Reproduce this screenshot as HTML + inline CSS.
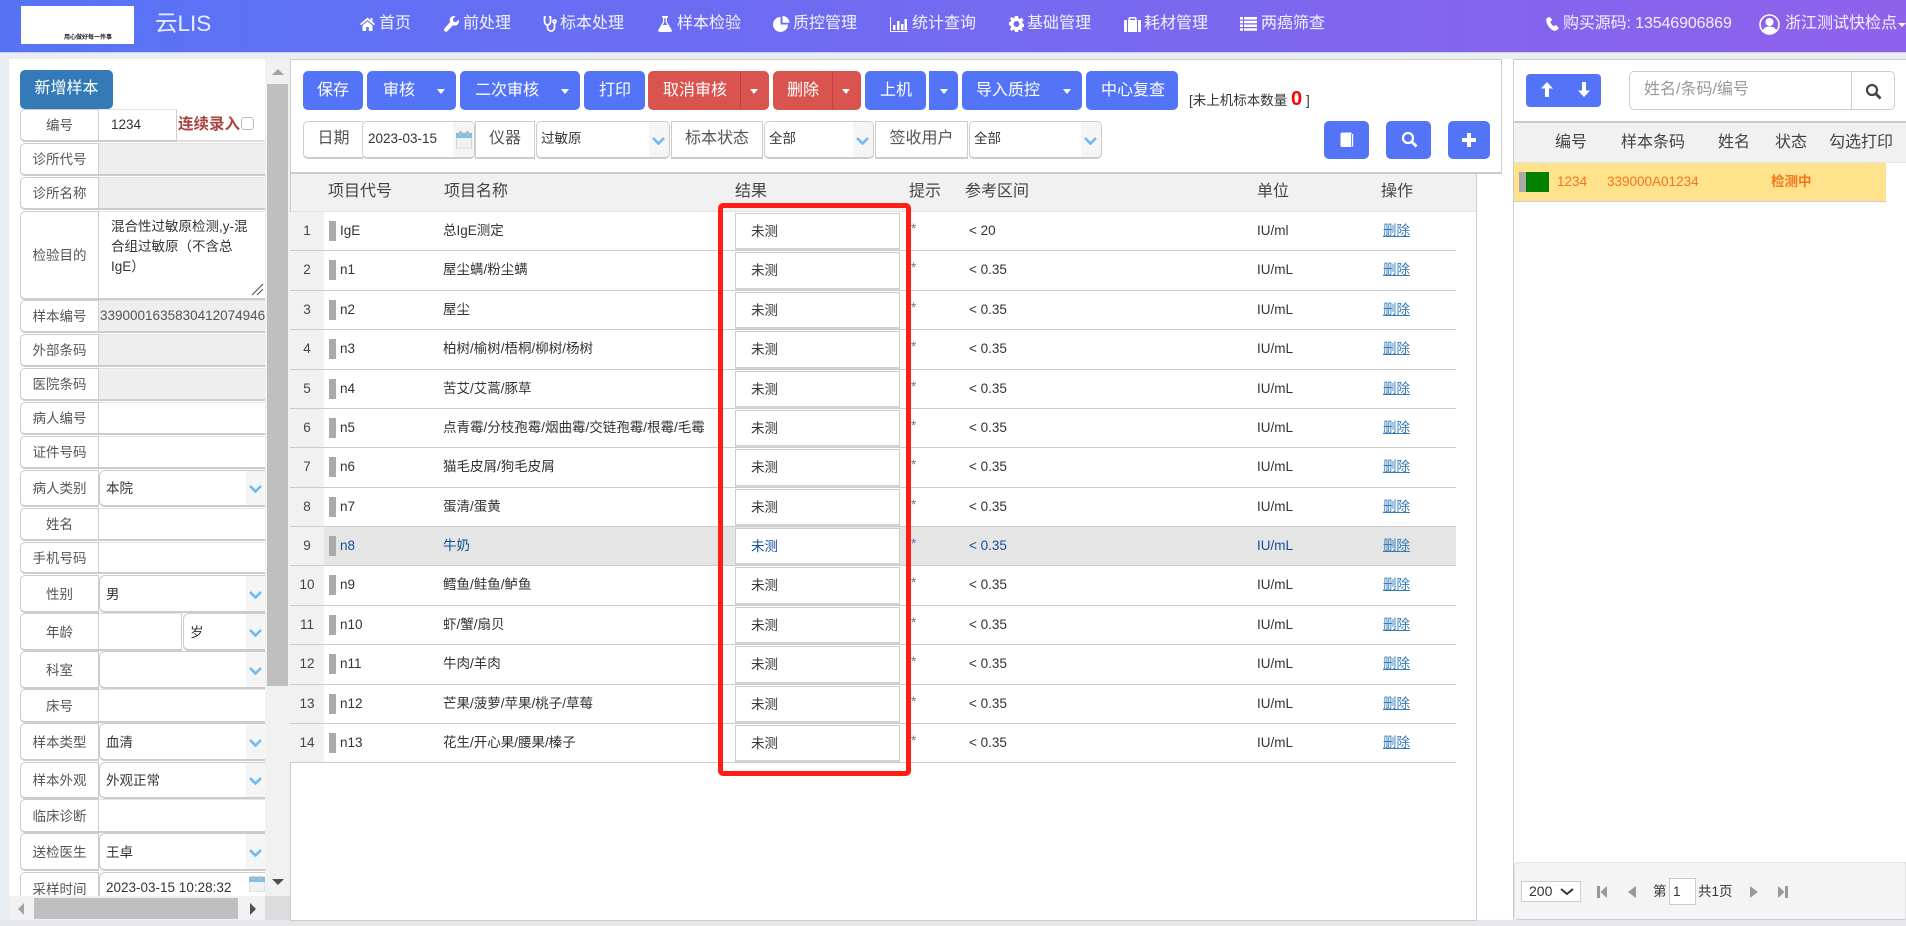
<!DOCTYPE html>
<html lang="zh-CN"><head><meta charset="utf-8"><title>云LIS</title>
<style>
*{box-sizing:border-box}
html,body{margin:0;padding:0;width:1906px;height:926px;overflow:hidden;background:#fff;font-family:"Liberation Sans","Noto Sans CJK SC",sans-serif;font-size:13.5px;color:#333}
div,span,a,svg{position:absolute}
.hd{left:0;top:0;width:1906px;height:52px;background:linear-gradient(90deg,#5673f6,#9061eb)}
.nv{top:14px;height:20px;line-height:20px;font-size:16px;color:#f2f2ff;white-space:nowrap}
.ic{fill:#fff}
.btn{top:71px;height:39px;background:#5474f8;border-radius:5px;color:#fff;font-size:16px;line-height:39px;white-space:nowrap}
.red{background:#d9534f}
.ct{width:0;height:0;top:89px;border-left:4px solid transparent;border-right:4px solid transparent;border-top:5px solid #fff}
.lb{top:121px;height:38px;background:#fff;border:1px solid #ccc;border-bottom-width:2px;text-align:center;line-height:33px;font-size:16px;color:#555;white-space:nowrap}
.sel{top:121px;height:38px;background:#fff;border:1px solid #ccc;border-bottom-width:2px;border-radius:5px;line-height:34px;padding-left:4px;white-space:nowrap;overflow:hidden}
.ar{top:0;right:0;bottom:0;width:20px;background:#f5f5f5}
.ch{width:13px;height:8px;fill:none;stroke:#6fbaf0;stroke-width:2.6}
.th{top:14px;font-size:16px;line-height:22px;color:#444;white-space:nowrap}
.r{left:0;width:1166px;border-bottom:1px solid #ccc;background:transparent}
.r span{top:0;bottom:0;white-space:nowrap;display:block;line-height:37px}
.nn{left:0;width:34px;background:#f1f1f1;text-align:center;color:#444}
.bb{left:39px;width:7px;top:9px!important;bottom:auto!important;height:20px;background:#aaa}
.cc{left:50px}
.mm{left:153px}
.ii{left:445px;width:165px;top:1px!important;bottom:0!important;background:#fff;border:1px solid #ccc;border-bottom:2px solid #d2d2d2;padding-left:15px;line-height:35px!important}
.aa{left:621px;color:#777;line-height:33px!important}
.ff{left:679px}
.uu{left:967px}
.dd{left:1093px;color:#337ab7;text-decoration:underline}
.fl{left:20px;width:245px}
.fl .l{left:0;top:0;bottom:0;width:79px;background:#fff;border:1px solid #ccc;border-radius:5px 0 0 5px;border-bottom-width:2px;text-align:center;font-size:13.5px;color:#555;white-space:nowrap;display:flex;align-items:center;justify-content:center;padding-bottom:2px}
.fl .v{left:79px;top:0;bottom:0;right:0;background:#fff;border-top:1px solid #e4e4e4;border-bottom:2px solid #ccc;padding-left:6px;padding-bottom:2px;display:flex;align-items:center;white-space:nowrap;overflow:hidden}
.fl .g{background:#eee;padding-left:0}
.fl .s{border:1px solid #ccc;border-bottom-width:2px;border-right:none;border-radius:6px 0 0 6px}
.fl .ar{width:19px}
.fl .ch{right:3px;top:14px}
</style></head><body>

<!-- page background zones -->
<div style="left:0;top:52px;width:1906px;height:7px;background:#e9edf4;border-top:1px solid #cfd2da"></div>
<div style="left:0;top:59px;width:9px;height:867px;background:#e9edf4"></div>
<div style="left:0;top:920px;width:1906px;height:6px;background:#e6e7ea"></div>

<!-- header -->
<div class="hd">
  <div style="left:21px;top:6px;width:113px;height:38px;background:#fff"><span style="left:43px;top:28px;font-size:6px;line-height:8px;color:#222;white-space:nowrap;font-weight:bold">用心做好每一件事</span></div>
  <span style="left:155px;top:10px;font-size:22.5px;line-height:28px;color:#e9edff;white-space:nowrap">云LIS</span>

  <svg class="ic" style="left:360px;top:17px" width="15" height="14" viewBox="0 0 15 14"><path d="M7.5 0.5 0 7l1 1.2L7.5 3 14 8.2 15 7l-2.5-2.2V1h-2v2.100zM2.500 8.500V14h3.700V10h2.600v4h3.700V8.500L7.500 4.300z"/></svg>
  <span class="nv" style="left:379px">首页</span>
  <svg class="ic" style="left:444px;top:16px" width="15" height="16" viewBox="0 0 15 16"><path d="M14.800 3.500 12 6.300 9.500 5.500 8.800 3 11.500.3C9.500-.4 7.500.2 6.500 1.700 5.600 3 5.500 4.600 6.200 6L.6 12.300c-.8.900-.8 2 0 2.800s2 .8 2.800 0L9 9.300c1.500.6 3.100.400 4.300-.6 1.500-1.200 2.100-3.200 1.500-5.200z"/></svg>
  <span class="nv" style="left:463px">前处理</span>
  <svg style="left:543px;top:16px" width="14" height="16" viewBox="0 0 14 16" fill="none" stroke="#fff" stroke-width="1.700"><path d="M3 1H1.500v4.500C1.500 7.500 3 9 4.500 9S7.500 7.500 7.500 5.500V1H6M4.500 9v2.500C4.500 13.500 6 15 8 15s3.500-1.500 3.500-3.500V7"/><circle cx="11.500" cy="5.500" r="1.500"/></svg>
  <span class="nv" style="left:560px">标本处理</span>
  <svg class="ic" style="left:658px;top:16px" width="14" height="16" viewBox="0 0 14 16"><path d="M4 0h6v1.500H9V6l4.700 8c.4.900-.1 2-1.200 2h-11C.4 16-.1 14.900.3 14L5 6V1.500H4zM6.300 2v4.300L4.800 9h4.400L7.700 6.300V2z"/></svg>
  <span class="nv" style="left:677px">样本检验</span>
  <svg class="ic" style="left:773px;top:16px" width="17" height="16" viewBox="0 0 17 16"><path d="M7.500 1A7.500 7.500 0 1 0 15 8.500H7.500z"/><path d="M9.500 0v6.800h7A7 7 0 0 0 9.500 0z"/></svg>
  <span class="nv" style="left:793px">质控管理</span>
  <svg class="ic" style="left:890px;top:17px" width="18" height="15" viewBox="0 0 18 15"><path d="M0 0h1v14h17v1H0zM3 8h2.500v5H3zM7 4h2.500v9H7zM11 7h2.500v6H11zM14.500 2H17v11h-2.500z"/></svg>
  <span class="nv" style="left:912px">统计查询</span>
  <svg class="ic" style="left:1009px;top:16px" width="15" height="16" viewBox="0 0 15 16"><path fill-rule="evenodd" d="M6 0h3l.4 2.200 1.500.7L13 1.800l1.600 2.400-1.500 1.600.3 1.500 1.600.8v2.800l-1.900.7-.3 1.500 1.300 1.700L12.500 15l-1.800-1.200-1.300.6L9 16H6l-.4-1.600-1.400-.6L2.500 15 .9 13.100l1.300-1.700-.4-1.500L0 9.100V6.300l1.900-.7.300-1.500L.9 2.500 2.600 1l1.700 1.100 1.300-.6zm1.500 5a3 3 0 1 0 0 6 3 3 0 0 0 0-6z"/></svg>
  <span class="nv" style="left:1027px">基础管理</span>
  <svg class="ic" style="left:1124px;top:17px" width="17" height="15" viewBox="0 0 17 15"><path fill-rule="evenodd" d="M5.500 0h6l1 1v2H16a1 1 0 0 1 1 1v10a1 1 0 0 1-1 1H1a1 1 0 0 1-1-1V4a1 1 0 0 1 1-1h3.500V1zm.5 1.500V3h5V1.500zM3 3v12h1V3zm10 0v12h1V3z"/></svg>
  <span class="nv" style="left:1144px">耗材管理</span>
  <svg class="ic" style="left:1240px;top:17px" width="17" height="14" viewBox="0 0 17 14"><path d="M0 0h3v2.500H0zM4 0h13v2.500H4zM0 3.700h3v2.500H0zM4 3.700h13v2.500H4zM0 7.500h3V10H0zM4 7.500h13V10H4zM0 11.300h3v2.500H0zM4 11.300h13v2.500H4z"/></svg>
  <span class="nv" style="left:1261px">两癌筛查</span>

  <svg class="ic" style="left:1546px;top:17px" width="13" height="14" viewBox="0 0 13 14"><path d="M2.500.3.600 1.500C-.3 3 .3 6.300 2.600 9.500c2.400 3.200 5.300 4.800 7.200 4.300l2.400-1.800c.5-.4.500-1 .1-1.500L10.400 8.500c-.3-.4-.9-.4-1.300-.2l-1.400 1C6 8.200 4.900 6.500 4.300 4.500l1.200-.9c.5-.3.600-.9.300-1.400L4.100.5C3.700 0 3 0 2.500.3z"/></svg>
  <span class="nv" style="left:1563px;letter-spacing:-.12px">购买源码: 13546906869</span>
  <svg style="left:1759px;top:14px" width="21" height="21" viewBox="0 0 21 21"><circle cx="10.500" cy="10.500" r="9.500" fill="none" stroke="#fff" stroke-width="1.600"/><circle cx="10.500" cy="8" r="4" fill="#fff"/><path d="M3.500 17c1-3.500 4-4.500 7-4.500s6 1 7 4.500c-2 1.800-4.500 3-7 3s-5-1.200-7-3z" fill="#fff"/></svg>
  <span class="nv" style="left:1785px">浙江测试快检点</span>
  <div style="left:1898px;top:23px;width:0;height:0;border-left:4px solid transparent;border-right:4px solid transparent;border-top:4px solid #fff"></div>
</div>

<!-- left panel -->
<div style="left:9px;top:59px;width:256px;height:837px;background:#fff"></div>
<div style="left:0;top:0;width:265px;height:896px;overflow:hidden">
  <div style="left:20px;top:70px;width:93px;height:39px;background:#337ab7;border-radius:5px;color:#fff;font-size:16px;text-align:center;line-height:37px">新增样本</div>

  <div class="fl" style="top:109px;height:33px;width:157px"><div class="l">编号</div><div class="v" style="border-right:1px solid #ccc;padding-left:12px">1234</div></div>
  <div style="left:177px;top:140px;width:88px;height:2px;background:#ddd"></div>
  <span style="left:178px;top:113px;color:#a94442;font-size:15.500px;font-weight:bold;line-height:24px;white-space:nowrap">连续录入</span>
  <div style="left:241px;top:117px;width:13px;height:13px;border:1px solid #bbb;border-radius:3px;background:#fff"></div>

  <div class="fl" style="top:143px;height:33px"><div class="l">诊所代号</div><div class="v g"></div></div>
  <div class="fl" style="top:177px;height:33px"><div class="l">诊所名称</div><div class="v g"></div></div>
  <div class="fl" style="top:211px;height:89px"><div class="l">检验目的</div><div class="v" style="display:block;padding:5px 0 0 12px;line-height:20px">混合性过敏原检测,y-混<br>合组过敏原（不含总<br>IgE）
    <svg style="right:1px;bottom:2px" width="13" height="13" viewBox="0 0 13 13" stroke="#555" stroke-width="1.100"><path d="M1 12 12 1M6 12l6-6"/></svg></div></div>
  <div class="fl" style="top:300px;height:33px"><div class="l">样本编号</div><div class="v g" style="padding-left:1px;color:#555">3390001635830412074946</div></div>
  <div class="fl" style="top:334px;height:33px"><div class="l">外部条码</div><div class="v g"></div></div>
  <div class="fl" style="top:368px;height:33px"><div class="l">医院条码</div><div class="v g"></div></div>
  <div class="fl" style="top:402px;height:33px"><div class="l">病人编号</div><div class="v"></div></div>
  <div class="fl" style="top:436px;height:33px"><div class="l">证件号码</div><div class="v"></div></div>
  <div class="fl" style="top:470px;height:37px"><div class="l">病人类别</div><div class="v s">本院<div class="ar"><svg class="ch" viewBox="0 0 13 8" style="left:3px;top:14px"><path d="M1 1l5.500 5.500L12 1"/></svg></div></div></div>
  <div class="fl" style="top:508px;height:33px"><div class="l">姓名</div><div class="v"></div></div>
  <div class="fl" style="top:542px;height:32px"><div class="l">手机号码</div><div class="v"></div></div>
  <div class="fl" style="top:575px;height:38px"><div class="l">性别</div><div class="v s">男<div class="ar"><svg class="ch" viewBox="0 0 13 8" style="left:3px;top:15px"><path d="M1 1l5.500 5.500L12 1"/></svg></div></div></div>
  <div class="fl" style="top:613px;height:38px"><div class="l">年龄</div><div class="v" style="right:83px;border-right:1px solid #ccc"></div><div class="v s" style="left:163px">岁<div class="ar"><svg class="ch" viewBox="0 0 13 8" style="left:3px;top:15px"><path d="M1 1l5.500 5.500L12 1"/></svg></div></div></div>
  <div class="fl" style="top:651px;height:38px"><div class="l">科室</div><div class="v s"><div class="ar"><svg class="ch" viewBox="0 0 13 8" style="left:3px;top:15px"><path d="M1 1l5.500 5.500L12 1"/></svg></div></div></div>
  <div class="fl" style="top:689px;height:34px"><div class="l">床号</div><div class="v"></div></div>
  <div class="fl" style="top:723px;height:38px"><div class="l">样本类型</div><div class="v s">血清<div class="ar"><svg class="ch" viewBox="0 0 13 8" style="left:3px;top:15px"><path d="M1 1l5.500 5.500L12 1"/></svg></div></div></div>
  <div class="fl" style="top:762px;height:37px"><div class="l">样本外观</div><div class="v s">外观正常<div class="ar"><svg class="ch" viewBox="0 0 13 8" style="left:3px;top:14px"><path d="M1 1l5.500 5.500L12 1"/></svg></div></div></div>
  <div class="fl" style="top:799px;height:34px"><div class="l">临床诊断</div><div class="v"></div></div>
  <div class="fl" style="top:833px;height:38px"><div class="l">送检医生</div><div class="v s">王卓<div class="ar"><svg class="ch" viewBox="0 0 13 8" style="left:3px;top:15px"><path d="M1 1l5.500 5.500L12 1"/></svg></div></div></div>
  <div class="fl" style="top:872px;height:34px"><div class="l">采样时间</div><div class="v s">2023-03-15 10:28:32
    <svg style="left:149px;top:3px" width="16" height="16" viewBox="0 0 16 16"><rect x="0" y="1" width="16" height="15" fill="#eef2f5" stroke="#ccd"/><rect x="0" y="1" width="16" height="5" fill="#7fc0e6"/><rect x="3" y="0" width="3" height="4" rx="1" fill="#bbb"/><rect x="10" y="0" width="3" height="4" rx="1" fill="#bbb"/></svg></div></div>
</div>

<!-- left scrollbars -->
<div style="left:265px;top:59px;width:25px;height:837px;background:#f1f1f1"></div>
<div style="left:267px;top:84px;width:21px;height:602px;background:#bfbfbf"></div>
<div style="left:272px;top:69px;width:0;height:0;border-left:6px solid transparent;border-right:6px solid transparent;border-bottom:6px solid #a3a3a3"></div>
<div style="left:272px;top:879px;width:0;height:0;border-left:6px solid transparent;border-right:6px solid transparent;border-top:6px solid #505050"></div>
<div style="left:9px;top:896px;width:256px;height:24px;background:#f1f1f1"></div>
<div style="left:34px;top:898px;width:204px;height:21px;background:#bfbfbf"></div>
<div style="left:18px;top:903px;width:0;height:0;border-top:6px solid transparent;border-bottom:6px solid transparent;border-right:6px solid #a3a3a3"></div>
<div style="left:250px;top:903px;width:0;height:0;border-top:6px solid transparent;border-bottom:6px solid transparent;border-left:6px solid #505050"></div>
<div style="left:265px;top:896px;width:25px;height:24px;background:#dcdcdc"></div>

<!-- toolbar panel -->
<div style="left:290px;top:59px;width:1212px;height:115px;background:#fff;border:1px solid #ccc;border-bottom:none"></div>

<div class="btn" style="left:303px;width:60px;padding-left:14px">保存</div>
<div class="btn" style="left:367px;width:89px;padding-left:16px">审核</div><div class="ct" style="left:437px"></div>
<div class="btn" style="left:460px;width:120px;padding-left:15px">二次审核</div><div class="ct" style="left:561px"></div>
<div class="btn" style="left:584px;width:61px;padding-left:15px">打印</div>
<div class="btn red" style="left:648px;width:121px;padding-left:15px">取消审核</div><div style="left:740px;top:71px;width:1px;height:39px;background:#c0413d"></div><div class="ct" style="left:750px"></div>
<div class="btn red" style="left:773px;width:88px;padding-left:14px">删除</div><div style="left:832px;top:71px;width:1px;height:39px;background:#c0413d"></div><div class="ct" style="left:842px"></div>
<div class="btn" style="left:865px;width:61px;padding-left:15px">上机</div>
<div class="btn" style="left:929px;width:29px;border-radius:0 5px 5px 0"></div><div class="ct" style="left:940px"></div>
<div class="btn" style="left:962px;width:120px;padding-left:14px">导入质控</div><div class="ct" style="left:1063px"></div>
<div class="btn" style="left:1086px;width:92px;padding-left:15px">中心复查</div>
<span style="left:1189px;top:89px;line-height:24px;white-space:nowrap">[未上机标本数量</span>
<span style="left:1291px;top:85px;line-height:28px;font-size:20px;font-weight:bold;color:#f00">0</span>
<span style="left:1306px;top:89px;line-height:24px">]</span>

<div class="lb" style="left:303px;width:60px;border-radius:5px 0 0 5px;border-right:none">日期</div>
<div class="sel" style="left:362px;width:113px;padding-left:5px">2023-03-15<div class="ar" style="width:21px"><svg style="left:3px;top:9px" width="16" height="18" viewBox="0 0 16 18"><rect x=".5" y="2" width="15" height="15" fill="#eff2f4" stroke="#d5d9dd"/><rect x="0" y="2" width="16" height="5" fill="#7fbfe5"/><rect x="3" y="0" width="3" height="5" rx="1" fill="#bbb"/><rect x="10" y="0" width="3" height="5" rx="1" fill="#bbb"/></svg></div></div>
<div class="lb" style="left:475px;width:60px">仪器</div>
<div class="sel" style="left:536px;width:134px">过敏原<div class="ar"><svg class="ch" viewBox="0 0 13 8" style="left:3px;top:15px"><path d="M1 1l5.500 5.500L12 1"/></svg></div></div>
<div class="lb" style="left:671px;width:92px">标本状态</div>
<div class="sel" style="left:764px;width:110px">全部<div class="ar"><svg class="ch" viewBox="0 0 13 8" style="left:3px;top:15px"><path d="M1 1l5.500 5.500L12 1"/></svg></div></div>
<div class="lb" style="left:875px;width:93px">签收用户</div>
<div class="sel" style="left:969px;width:133px">全部<div class="ar"><svg class="ch" viewBox="0 0 13 8" style="left:3px;top:15px"><path d="M1 1l5.500 5.500L12 1"/></svg></div></div>

<div class="btn" style="left:1324px;top:121px;width:45px;height:38px"><svg style="left:16px;top:11px" width="15" height="15" viewBox="0 0 15 15"><path d="M2 .5h9.500V2h1.700v12.500H11.500V15H2a1.500 1.500 0 0 1-1.500-1.500v-11A2 2 0 0 1 2 .5z" fill="#fff"/><path d="M11.500 2v12.500" stroke="#5474f8" stroke-width=".8"/></svg></div>
<div class="btn" style="left:1386px;top:121px;width:45px;height:38px"><svg style="left:15px;top:10px" width="17" height="17" viewBox="0 0 17 17" fill="none" stroke="#fff" stroke-width="2.200"><circle cx="7" cy="7" r="5"/><path d="M10.500 10.500 15.500 15.500" stroke-width="2.800"/></svg></div>
<div class="btn" style="left:1448px;top:121px;width:42px;height:38px"><svg style="left:14px;top:12px" width="14" height="14" viewBox="0 0 14 14"><path d="M5 0h4v5h5v4H9v5H5V9H0V5h5z" fill="#fff"/></svg></div>

<!-- table -->
<div style="left:290px;top:172px;width:1187px;height:749px;background:#fff;border:1px solid #ccc;border-top:2px solid #ccc"></div>
<div style="left:290px;top:172px;width:1212px;height:2px;background:#ccc"></div>
<div style="left:291px;top:174px;width:1185px;height:38px;background:#f1f1f1;border-bottom:1px solid #e4e4e4">
  <span class="th" style="left:37px;top:7px">项目代号</span>
  <span class="th" style="left:153px;top:7px">项目名称</span>
  <span class="th" style="left:444px;top:7px">结果</span>
  <span class="th" style="left:618px;top:7px">提示</span>
  <span class="th" style="left:674px;top:7px">参考区间</span>
  <span class="th" style="left:966px;top:7px">单位</span>
  <span class="th" style="left:1090px;top:7px">操作</span>
</div>
<div style="left:290px;top:1px;width:1170px;height:925px">
  <div class="r" style="top:211px;height:39px"><span class="nn">1</span><span class="bb"></span><span class="cc">IgE</span><span class="mm">总IgE测定</span><span class="ii">未测</span><span class="aa">*</span><span class="ff">&lt; 20</span><span class="uu">IU/ml</span><span class="dd">删除</span></div>
  <div class="r" style="top:250px;height:40px"><span class="nn">2</span><span class="bb"></span><span class="cc">n1</span><span class="mm">屋尘螨/粉尘螨</span><span class="ii">未测</span><span class="aa">*</span><span class="ff">&lt; 0.35</span><span class="uu">IU/mL</span><span class="dd">删除</span></div>
  <div class="r" style="top:290px;height:39px"><span class="nn">3</span><span class="bb"></span><span class="cc">n2</span><span class="mm">屋尘</span><span class="ii">未测</span><span class="aa">*</span><span class="ff">&lt; 0.35</span><span class="uu">IU/mL</span><span class="dd">删除</span></div>
  <div class="r" style="top:329px;height:40px"><span class="nn">4</span><span class="bb"></span><span class="cc">n3</span><span class="mm">柏树/榆树/梧桐/柳树/杨树</span><span class="ii">未测</span><span class="aa">*</span><span class="ff">&lt; 0.35</span><span class="uu">IU/mL</span><span class="dd">删除</span></div>
  <div class="r" style="top:369px;height:39px"><span class="nn">5</span><span class="bb"></span><span class="cc">n4</span><span class="mm">苦艾/艾蒿/豚草</span><span class="ii">未测</span><span class="aa">*</span><span class="ff">&lt; 0.35</span><span class="uu">IU/mL</span><span class="dd">删除</span></div>
  <div class="r" style="top:408px;height:39px"><span class="nn">6</span><span class="bb"></span><span class="cc">n5</span><span class="mm">点青霉/分枝孢霉/烟曲霉/交链孢霉/根霉/毛霉</span><span class="ii">未测</span><span class="aa">*</span><span class="ff">&lt; 0.35</span><span class="uu">IU/mL</span><span class="dd">删除</span></div>
  <div class="r" style="top:447px;height:40px"><span class="nn">7</span><span class="bb"></span><span class="cc">n6</span><span class="mm">猫毛皮屑/狗毛皮屑</span><span class="ii">未测</span><span class="aa">*</span><span class="ff">&lt; 0.35</span><span class="uu">IU/mL</span><span class="dd">删除</span></div>
  <div class="r" style="top:487px;height:39px"><span class="nn">8</span><span class="bb"></span><span class="cc">n7</span><span class="mm">蛋清/蛋黄</span><span class="ii">未测</span><span class="aa">*</span><span class="ff">&lt; 0.35</span><span class="uu">IU/mL</span><span class="dd">删除</span></div>
  <div class="r" style="top:526px;height:39px;background:linear-gradient(90deg,#f1f1f1 34px,#e5e5e5 34px)"><span class="nn" style="color:#444">9</span><span class="bb"></span><span class="cc" style="color:#134f9a">n8</span><span class="mm" style="color:#134f9a">牛奶</span><span class="ii" style="color:#134f9a">未测</span><span class="aa" style="color:#5c7aa5">*</span><span class="ff" style="color:#134f9a">&lt; 0.35</span><span class="uu" style="color:#134f9a">IU/mL</span><span class="dd">删除</span></div>
  <div class="r" style="top:565px;height:40px"><span class="nn">10</span><span class="bb"></span><span class="cc">n9</span><span class="mm">鳕鱼/鲑鱼/鲈鱼</span><span class="ii">未测</span><span class="aa">*</span><span class="ff">&lt; 0.35</span><span class="uu">IU/mL</span><span class="dd">删除</span></div>
  <div class="r" style="top:605px;height:39px"><span class="nn">11</span><span class="bb"></span><span class="cc">n10</span><span class="mm">虾/蟹/扇贝</span><span class="ii">未测</span><span class="aa">*</span><span class="ff">&lt; 0.35</span><span class="uu">IU/mL</span><span class="dd">删除</span></div>
  <div class="r" style="top:644px;height:40px"><span class="nn">12</span><span class="bb"></span><span class="cc">n11</span><span class="mm">牛肉/羊肉</span><span class="ii">未测</span><span class="aa">*</span><span class="ff">&lt; 0.35</span><span class="uu">IU/mL</span><span class="dd">删除</span></div>
  <div class="r" style="top:684px;height:39px"><span class="nn">13</span><span class="bb"></span><span class="cc">n12</span><span class="mm">芒果/菠萝/苹果/桃子/草莓</span><span class="ii">未测</span><span class="aa">*</span><span class="ff">&lt; 0.35</span><span class="uu">IU/mL</span><span class="dd">删除</span></div>
  <div class="r" style="top:723px;height:39px"><span class="nn">14</span><span class="bb"></span><span class="cc">n13</span><span class="mm">花生/开心果/腰果/榛子</span><span class="ii">未测</span><span class="aa">*</span><span class="ff">&lt; 0.35</span><span class="uu">IU/mL</span><span class="dd">删除</span></div>
</div>

<!-- red annotation -->
<div style="left:718px;top:203px;width:193px;height:573px;border:5.500px solid #ff1f14;border-radius:5px"></div>

<!-- right panel -->
<div style="left:1513px;top:59px;width:393px;height:861px;background:#fff;border-left:1px solid #ccc;border-top:1px solid #ccc"></div>
<div style="left:1526px;top:74px;width:75px;height:33px;background:#5474f8;border-radius:4px">
  <svg style="left:15px;top:8px" width="12" height="15" viewBox="0 0 12 15"><path d="M6 0l6 6.500H8V15H4V6.500H0z" fill="#fff"/></svg>
  <svg style="left:52px;top:8px" width="12" height="15" viewBox="0 0 12 15"><path d="M4 0h4v8.500h4L6 15 0 8.500h4z" fill="#fff"/></svg>
</div>
<div style="left:1629px;top:71px;width:223px;height:39px;background:#fff;border:1px solid #ccc;border-radius:5px 0 0 5px;padding-left:14px;line-height:36px;font-size:16px;color:#999;white-space:nowrap">姓名/条码/编号</div>
<div style="left:1851px;top:71px;width:44px;height:39px;background:#fff;border:1px solid #ccc;border-radius:0 5px 5px 0"><svg style="left:13px;top:11px" width="17" height="17" viewBox="0 0 17 17" fill="none" stroke="#444" stroke-width="2.200"><circle cx="7" cy="7" r="5"/><path d="M10.500 10.500 15.500 15.500" stroke-width="2.800"/></svg></div>
<div style="left:1514px;top:121px;width:392px;height:42px;background:#f1f1f1;border-top:2px solid #ccc;border-bottom:1px solid #e4e4e4">
  <span class="th" style="left:41px;top:9px">编号</span>
  <span class="th" style="left:107px;top:9px">样本条码</span>
  <span class="th" style="left:204px;top:9px">姓名</span>
  <span class="th" style="left:261px;top:9px">状态</span>
  <span class="th" style="left:315px;top:9px">勾选打印</span>
</div>
<div style="left:1514px;top:163px;width:372px;height:39px;background:#ffe28c;border-bottom:1px solid #ccc">
  <div style="left:5px;top:9px;width:7px;height:20px;background:#aaa"></div>
  <div style="left:12px;top:9px;width:23px;height:20px;background:#008000"></div>
  <span style="left:43px;top:8px;line-height:21px;color:#f5741e">1234</span>
  <span style="left:93px;top:8px;line-height:21px;color:#f5741e;white-space:nowrap">339000A01234</span>
  <span style="left:257px;top:8px;line-height:21px;color:#f5741e;font-weight:bold;white-space:nowrap">检测中</span>
</div>

<!-- pager -->
<div style="left:1514px;top:862px;width:392px;height:58px;background:#f4f4f4;border:1px solid #e2e2e2;border-bottom:1px solid #ccc;border-radius:4px 0 0 4px"></div>
<div style="left:1521px;top:881px;width:60px;height:21px;background:#fff;border:1px solid #ccc;padding-left:7px;line-height:18px;font-size:14px;color:#333">200<svg style="left:38px;top:6px" width="14" height="8" viewBox="0 0 14 8" fill="none" stroke="#333" stroke-width="2"><path d="M1 1l6 5 6-5"/></svg></div>
<svg style="left:1597px;top:886px" width="11" height="12" viewBox="0 0 11 12" fill="#999"><path d="M0 0h3v12H0zM10 0v12L3.500 6z"/></svg>
<svg style="left:1628px;top:886px" width="8" height="12" viewBox="0 0 8 12" fill="#999"><path d="M8 0v12L0 6z"/></svg>
<span style="left:1653px;top:882px;line-height:20px;white-space:nowrap">第</span>
<div style="left:1669px;top:878px;width:27px;height:27px;background:#fff;border:1px solid #ccc;padding-left:3px;line-height:25px">1</div>
<span style="left:1698px;top:882px;line-height:20px;white-space:nowrap">共1页</span>
<svg style="left:1750px;top:886px" width="8" height="12" viewBox="0 0 8 12" fill="#999"><path d="M0 0v12l8-6z"/></svg>
<svg style="left:1778px;top:886px" width="10" height="12" viewBox="0 0 10 12" fill="#999"><path d="M0 0v12l6.500-6zM7 0h3v12H7z"/></svg>

</body></html>
